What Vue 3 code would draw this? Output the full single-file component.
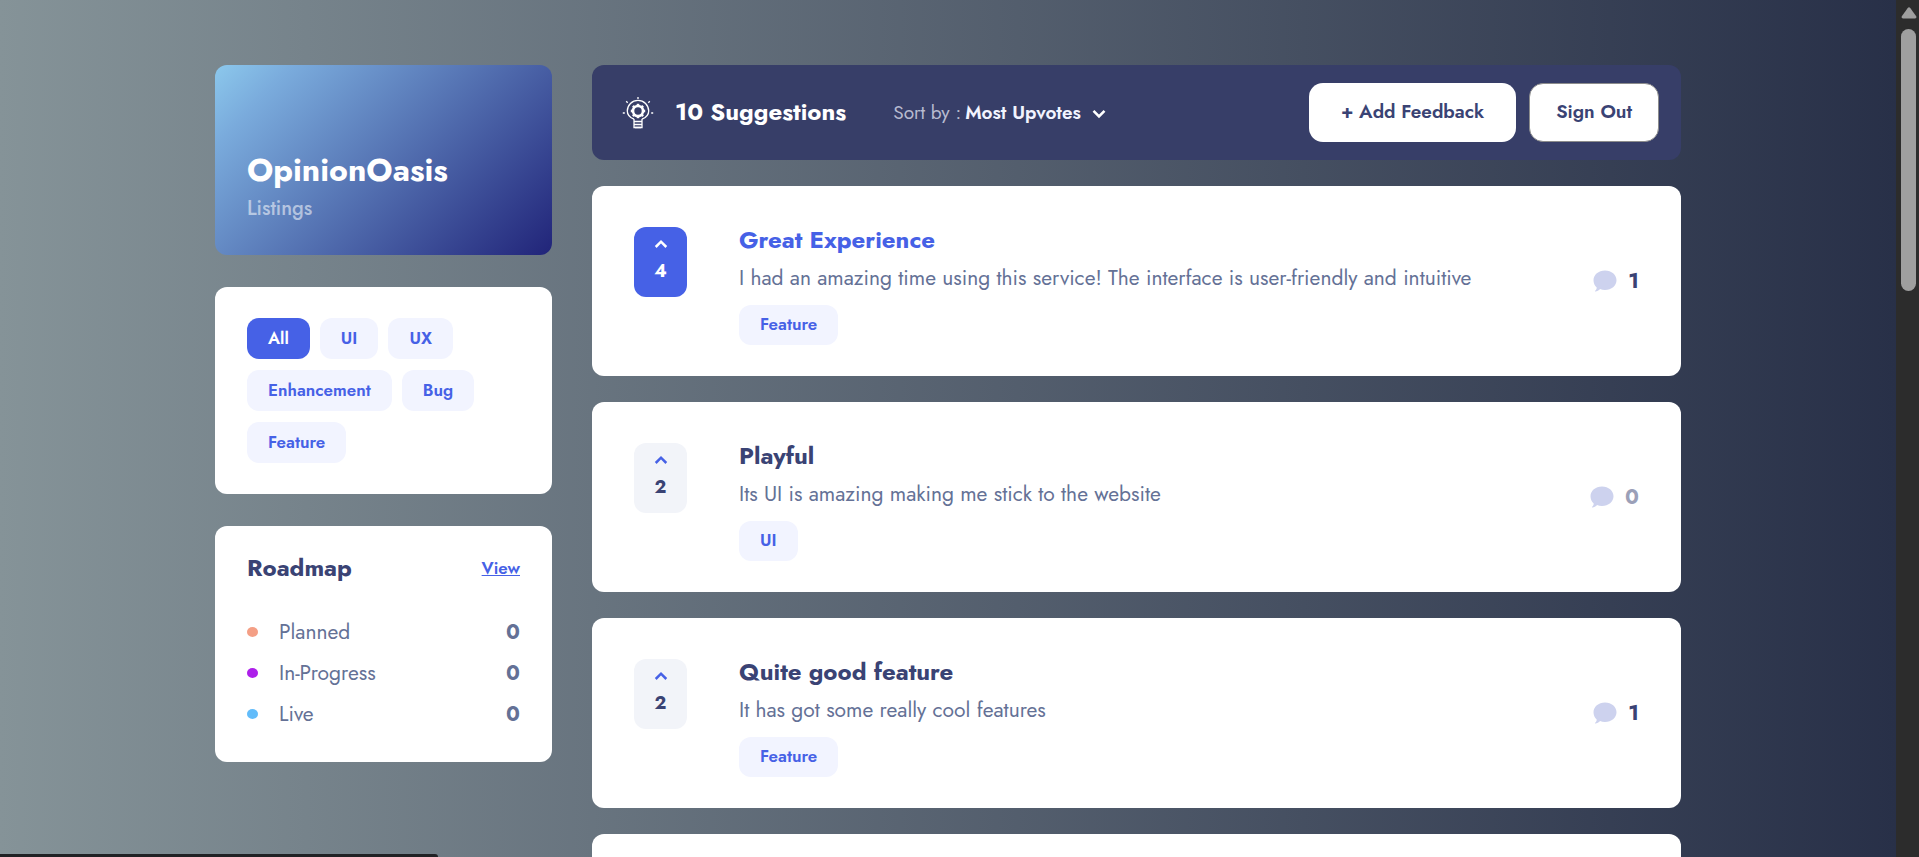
<script setup>
import { ref } from 'vue'

const filters = ['All', 'UI', 'UX', 'Enhancement', 'Bug', 'Feature']
const activeFilter = ref('All')
const sortBy = ref('Most Upvotes')

const roadmap = [
  { label: 'Planned', tone: 'planned', count: 0 },
  { label: 'In-Progress', tone: 'progress', count: 0 },
  { label: 'Live', tone: 'live', count: 0 },
]

const suggestions = ref([
  {
    title: 'Great Experience',
    text: 'I had an amazing time using this service! The interface is user-friendly and intuitive',
    tag: 'Feature',
    votes: 4,
    comments: 1,
    active: true,
  },
  {
    title: 'Playful',
    text: 'Its UI is amazing making me stick to the website',
    tag: 'UI',
    votes: 2,
    comments: 0,
    active: false,
  },
  {
    title: 'Quite good feature',
    text: 'It has got some really cool features',
    tag: 'Feature',
    votes: 2,
    comments: 1,
    active: false,
  },
])

const teeth = [0, 45, 90, 135, 180, 225, 270, 315]
</script>

<template>
  <div class="window">
    <div class="page">
      <div class="layout">
        <aside class="sidebar">
          <section class="brand">
            <h1>OpinionOasis</h1>
            <p>Listings</p>
          </section>

          <section class="panel filters">
            <button
              v-for="name in filters"
              :key="name"
              type="button"
              class="pill"
              :class="{ selected: name === activeFilter }"
              @click="activeFilter = name"
            >{{ name }}</button>
          </section>

          <section class="panel roadmap">
            <header>
              <h2>Roadmap</h2>
              <a href="#roadmap">View</a>
            </header>
            <ul>
              <li v-for="row in roadmap" :key="row.label">
                <span class="dot" :class="row.tone"></span>
                <span class="label">{{ row.label }}</span>
                <strong>{{ row.count }}</strong>
              </li>
            </ul>
          </section>
        </aside>

        <main class="main">
          <header class="toolbar">
            <svg class="bulb" viewBox="0 0 32 32" width="32" height="32" fill="none" stroke="#fff">
              <path d="M12 22.2C8 20.6 5.300 17.600 5.300 14A10.700 10.700 0 0 1 26.700 14C26.700 17.600 24 20.600 20 22.200" stroke-width="1.300" />
              <path d="M12 22v8.500h8V22M12 24.500h8M12 27.500h8" stroke-width="1.300" />
              <path d="M13 30.500h6" stroke-width="1.500" />
              <circle cx="16" cy="14" r="5" stroke-width="2.600" />
              <g stroke-width="2.600">
                <path v-for="a in teeth" :key="a" d="M16 6.800v2.400" :transform="`rotate(${a} 16 14)`" />
              </g>
              <path d="M16 0v2M4.200 4.200l1.500 1.500M27.800 4.200l-1.500 1.500M.8 16h2M29.200 16h2" stroke-width="1.300" />
            </svg>
            <h2>10 Suggestions</h2>
            <div class="sort">
              <label for="sort">Sort by :</label>
              <div class="select">
                <select id="sort" v-model="sortBy">
                  <option>Most Upvotes</option>
                </select>
                <svg viewBox="0 0 14 10" width="14" height="10" fill="none" stroke="#fff" stroke-width="2.600">
                  <path d="M1.500 1.800L7 7.300l5.500-5.500" />
                </svg>
              </div>
            </div>
            <div class="actions">
              <button type="button" class="add">+ Add Feedback</button>
              <button type="button" class="out">Sign Out</button>
            </div>
          </header>

          <div class="list">
            <article v-for="item in suggestions" :key="item.title" class="card">
              <button
                type="button"
                class="vote"
                :class="{ voted: item.active }"
                @click="item.active = !item.active"
              >
                <svg viewBox="0 0 14 10" width="14" height="10" fill="none" stroke="currentColor" stroke-width="2.500">
                  <path d="M1.700 8L7 2.700 12.300 8" />
                </svg>
                <span>{{ item.votes }}</span>
              </button>
              <div class="body">
                <h3 :class="{ lit: item.active }">{{ item.title }}</h3>
                <p>{{ item.text }}</p>
                <span class="pill tag">{{ item.tag }}</span>
              </div>
              <div class="comments" :class="{ none: item.comments === 0 }">
                <svg viewBox="0 0 24 22" width="24" height="22" fill="#cdd2ee">
                  <path d="M12 0.500C18.500 0.500 23.500 4.800 23.500 10.300S18.500 20 12 20c-1.900 0-3.500-.3-4.900-.9-1.400 1.500-3 2.300-4.800 2.300-.4 0-.4-.4-.1-.7 1-.9 1.500-2 1.500-3.300C1.600 15.600.5 13.100.5 10.300.5 4.800 5.500.5 12 .5z" />
                </svg>
                <strong>{{ item.comments }}</strong>
              </div>
            </article>
            <article class="card"></article>
          </div>
        </main>
      </div>
    </div>

    <div class="scrollbar">
      <svg viewBox="0 0 16 12" width="16" height="12" fill="#9f9f9f">
        <path d="M6.600 1.200Q8 -.6 9.400 1.200L15.200 9.200Q16 11.300 14 11.500H2Q0 11.300.8 9.200z" />
      </svg>
      <div class="thumb"></div>
    </div>
    <div class="status"></div>
  </div>
</template>

<style>
body {
  margin: 0;
}
</style>

<style scoped>
* {
  box-sizing: border-box;
}

.window {
  display: flex;
  height: 100vh;
  overflow: hidden;
  font-family: Jost, Lato, sans-serif;
  color: #3a4374;
}

h1,
h2,
h3,
p,
ul {
  margin: 0;
  padding: 0;
}

button,
select {
  font-family: inherit;
  cursor: pointer;
}

.page {
  flex: 1;
  padding: 65px 32px 0;
  background: linear-gradient(to right, #859398, #283048);
}

.layout {
  display: flex;
  align-items: flex-start;
  gap: 40px;
  max-width: 1466px;
  margin: 0 auto;
}

.sidebar {
  display: flex;
  flex: none;
  flex-direction: column;
  gap: 32px;
  width: 337px;
}

.brand {
  display: flex;
  flex-direction: column;
  justify-content: flex-end;
  min-height: 190px;
  padding: 32px;
  border-radius: 12px;
  background: linear-gradient(135deg, #8cc8ec, #7aabdc 15%, #212479);
  color: #fff;
}

.brand h1 {
  font-size: 32px;
  line-height: 40px;
  font-weight: 700;
}

.brand p {
  font-size: 20px;
  line-height: 28px;
  margin-top: 5px;
  font-weight: 500;
  color: rgba(255, 255, 255, 0.55);
}

.panel {
  padding: 32px;
  border-radius: 12px;
  background: #fff;
}

.filters {
  display: flex;
  flex-wrap: wrap;
  gap: 11px 10px;
  padding: 31px 32px;
}

.pill {
  height: 41px;
  padding: 0 21px;
  border: 0;
  border-radius: 12px;
  background: #f2f4ff;
  color: #4661e6;
  font-size: 17px;
  line-height: 38px;
  font-weight: 600;
}

button.pill {
  padding-bottom: 2px;
}

.pill.selected {
  background: #4661e6;
  color: #fff;
}

.roadmap {
  padding: 30px 32px 28px;
}

.roadmap header {
  display: flex;
  align-items: center;
  justify-content: space-between;
  margin-bottom: 31px;
}

.roadmap h2 {
  font-size: 24px;
  line-height: 24px;
}

.roadmap a {
  color: #4661e6;
  font-size: 17px;
  line-height: 24px;
  font-weight: 600;
}

.roadmap ul {
  list-style: none;
}

.roadmap li {
  display: flex;
  align-items: center;
  height: 41px;
  color: #647196;
  font-size: 21px;
}

.dot {
  width: 11px;
  height: 10px;
  margin-right: 21px;
  border-radius: 50%;
}

.planned {
  background: #f49f85;
}

.progress {
  background: #ad1fea;
}

.live {
  background: #62bcfa;
}

.label {
  flex: 1;
}

.main {
  flex: 1;
  min-width: 0;
}

.toolbar {
  display: flex;
  align-items: center;
  min-height: 95px;
  margin-bottom: 26px;
  padding: 0 22px 0 30px;
  border-radius: 12px;
  background: #373e68;
  color: #fff;
}

.bulb {
  margin-right: 21px;
}

.toolbar h2 {
  padding-bottom: 2px;
  font-size: 24px;
  line-height: 32px;
}

.sort {
  display: flex;
  align-items: center;
  gap: 4px;
  margin-left: 47px;
  font-size: 19px;
}

.sort label {
  color: #b8bbd0;
}

.select {
  position: relative;
}

.select select {
  padding: 0 26px 0 0;
  border: 0;
  background: transparent;
  color: #f2f4ff;
  font-size: 19px;
  line-height: 28px;
  font-weight: 600;
  appearance: none;
}

.select svg {
  position: absolute;
  top: 10px;
  right: 1px;
  pointer-events: none;
}

.actions {
  display: flex;
  gap: 13px;
  margin-left: auto;
}

.actions button {
  height: 59px;
  border: 0;
  border-radius: 14px;
  background: #fff;
  color: #3a4374;
  font-size: 19px;
  font-weight: 600;
}

.actions .add {
  padding: 0 32px 2px;
}

.actions .out {
  padding: 0 26px 2px;
  border: 1px solid #8c8c8c;
}

.list {
  display: flex;
  flex-direction: column;
  gap: 26px;
}

.card {
  display: flex;
  align-items: flex-start;
  min-height: 190px;
  padding: 35px 42px 31px;
  border-radius: 12px;
  background: #fff;
}

.vote {
  display: flex;
  flex: none;
  flex-direction: column;
  align-items: center;
  gap: 10px;
  width: 53px;
  height: 70px;
  margin-top: 6px;
  padding: 12px 0 0;
  border: 0;
  border-radius: 12px;
  background: #f2f4f9;
  color: #4661e6;
}

.vote span {
  color: #3a4374;
  font-size: 18px;
  line-height: 24px;
  font-weight: 700;
}

.vote.voted {
  background: #4661e6;
  color: #fff;
}

.vote.voted span {
  color: #fff;
}

.body {
  flex: 1;
  margin-left: 52px;
}

.body h3 {
  font-size: 24px;
  line-height: 38px;
}

.body h3.lit {
  color: #4661e6;
}

.body p {
  color: #647196;
  font-size: 21px;
  line-height: 38px;
}

.tag {
  display: inline-block;
  height: 40px;
  margin-top: 8px;
}

.comments {
  display: flex;
  align-items: center;
  align-self: center;
  gap: 11px;
  margin-bottom: 4px;
  font-size: 21px;
}

.comments.none strong {
  opacity: 0.5;
}

.scrollbar {
  display: flex;
  flex: none;
  flex-direction: column;
  align-items: center;
  gap: 10px;
  width: 23px;
  padding: 7px 2px 0 4px;
  background: #2c2c2c;
}

.scrollbar svg {
  flex: none;
}

.thumb {
  width: 15px;
  height: 262px;
  border-radius: 8px;
  background: #9f9f9f;
}

.status {
  position: fixed;
  bottom: 0;
  left: 0;
  width: 438px;
  height: 3px;
  border-radius: 0 4px 0 0;
  background: #202124;
}
</style>
